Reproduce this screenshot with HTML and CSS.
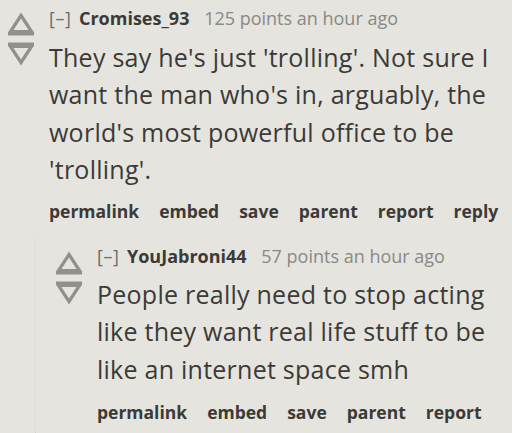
FILE: index.html
```html
<!DOCTYPE html>
<html>
<head>
<link rel="stylesheet" href="styles.css">
</head>
<body>
  <div class="comment">
    <div class="votes">
      <svg class="arrow" width="28" height="24" viewBox="0 0 28 24">
        <polygon points="14,3.5 24.5,19.5 3.5,19.5" fill="none" stroke="#91908d" stroke-width="3.2"/>
        <rect x="1" y="20" width="26" height="3.5" fill="#91908d"/>
      </svg>
      <svg class="arrow" width="28" height="24" viewBox="0 0 28 24">
        <rect x="1" y="0.5" width="26" height="3.5" fill="#91908d"/>
        <polygon points="3.5,4.5 24.5,4.5 14,20.5" fill="none" stroke="#91908d" stroke-width="3.2"/>
      </svg>
    </div>
    <div class="entry">
      <div class="tagline">
        <span class="expand">[&ndash;]</span>
        <span class="author">Cromises_93</span>
        <span class="score">125 points an hour ago</span>
      </div>
      <div class="body">They say he's just 'trolling'. Not sure I want the man who's in, arguably, the world's most powerful office to be 'trolling'.</div>
      <ul class="buttons">
        <li>permalink</li>
        <li>embed</li>
        <li>save</li>
        <li>parent</li>
        <li>report</li>
        <li>reply</li>
      </ul>
    </div>
  </div>

  <div class="child">
    <div class="comment">
      <div class="votes">
        <svg class="arrow" width="28" height="24" viewBox="0 0 28 24">
          <polygon points="14,3.5 24.5,19.5 3.5,19.5" fill="none" stroke="#91908d" stroke-width="3.2"/>
          <rect x="1" y="20" width="26" height="3.5" fill="#91908d"/>
        </svg>
        <svg class="arrow" width="28" height="24" viewBox="0 0 28 24">
          <rect x="1" y="0.5" width="26" height="3.5" fill="#91908d"/>
          <polygon points="3.5,4.5 24.5,4.5 14,20.5" fill="none" stroke="#91908d" stroke-width="3.2"/>
        </svg>
      </div>
      <div class="entry">
        <div class="tagline">
          <span class="expand">[&ndash;]</span>
          <span class="author">YouJabroni44</span>
          <span class="score">57 points an hour ago</span>
        </div>
        <div class="body">People really need to stop acting like they want real life stuff to be like an internet space smh</div>
        <ul class="buttons">
          <li>permalink</li>
          <li>embed</li>
          <li>save</li>
          <li>parent</li>
          <li>report</li>
        </ul>
      </div>
    </div>
  </div>
</body>
</html>
```

FILE: styles.css
```css
body {
	margin: 0;
	background-color: #e5e4df;
	font-family: "Open Sans", "Noto Sans", sans-serif;
	color: #3c3a36;
	width: 512px;
	height: 433px;
	overflow: hidden;
}

.comment {
	display: flex;
	align-items: flex-start;
}

.votes {
	display: flex;
	flex-direction: column;
	gap: 6px;
	width: 28px;
	margin: 12px 14px 0 7px;
}

.arrow {
	display: block;
}

.entry {
	flex: 1;
	padding-top: 7px;
	padding-right: 8px;
}

.tagline {
	font-size: 18px;
	line-height: 22px;
	color: #8a8985;
	white-space: nowrap;
}

.expand {
	color: #6e6c68;
	letter-spacing: 0.5px;
	margin-right: 3px;
}

.author {
	color: #3c3a36;
	font-weight: bold;
	margin-right: 10px;
}

.body {
	font-size: 25px;
	line-height: 37.5px;
	letter-spacing: 0.25px;
	margin-top: 9.5px;
}

.buttons {
	list-style: none;
	margin: 11.5px 0 0;
	padding: 0;
	display: flex;
	gap: 20px;
	font-size: 17.5px;
	font-weight: bold;
	line-height: 22px;
	white-space: nowrap;
}

.child {
	margin: 16px 0 0 35px;
	border-left: 1px dotted #d2d5de;
	padding-left: 19px;
	padding-bottom: 20px;
}

.child .votes {
	margin-top: 13px;
	margin-left: 0;
}

.child .body {
	margin-top: 8.5px;
}

.child .buttons {
	margin-top: 13px;
}
```
